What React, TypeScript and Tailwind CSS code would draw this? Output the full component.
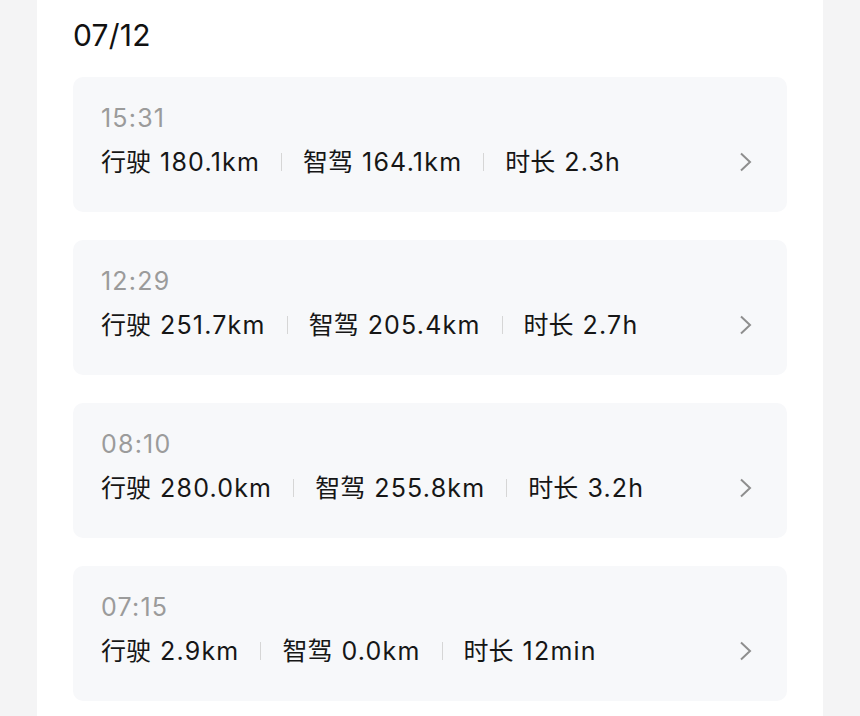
const trips = [
  { time: "15:31", drive: "180.1km", smart: "164.1km", dur: "2.3h" },
  { time: "12:29", drive: "251.7km", smart: "205.4km", dur: "2.7h" },
  { time: "08:10", drive: "280.0km", smart: "255.8km", dur: "3.2h" },
  { time: "07:15", drive: "2.9km", smart: "0.0km", dur: "12min" },
];

function Sep() {
  return <div className="mx-[21px] h-[18px] w-px bg-[#d6d6d6]" />;
}

function Stat({ label, value }: { label: string; value: string }) {
  return (
    <span className="flex items-center gap-[9px]">
      <span>{label}</span>
      <span className="tracking-[1.2px]">{value}</span>
    </span>
  );
}

export default function App() {
  return (
    <div
      className="min-h-[716px] w-full bg-[#f4f4f5]"
      style={{ fontFamily: '"Inter", "Noto Sans CJK SC", sans-serif' }}
    >
      <div className="mx-[37px] min-h-[716px] bg-white px-[36px]">
        <div className="pt-[14px] text-[30px] leading-[42px] text-[#111] tracking-[0.2px]">
          07/12
        </div>

        <div className="mt-[21px] flex flex-col gap-[28px]">
          {trips.map((t) => (
            <div
              key={t.time}
              className="flex h-[135px] items-start rounded-[10px] bg-[#f7f8fa] pl-[28px] pr-[34px] pt-[23px]"
            >
              <div className="flex-1">
                <div className="text-[25px] leading-[36px] tracking-[1.2px] text-[#9b9b9b]">
                  {t.time}
                </div>
                <div className="mt-[8px] flex items-center text-[25px] leading-[36px] text-[#161616]">
                  <Stat label="行驶" value={t.drive} />
                  <Sep />
                  <Stat label="智驾" value={t.smart} />
                  <Sep />
                  <Stat label="时长" value={t.dur} />
                </div>
              </div>
              <svg
                width="14"
                height="20"
                viewBox="0 0 14 20"
                className="mt-[52px]"
                fill="none"
                stroke="#8e8e8e"
                strokeWidth="2"
              >
                <path d="M2 1.5l9 8.5-9 8.5" />
              </svg>
            </div>
          ))}
        </div>
      </div>
    </div>
  );
}
